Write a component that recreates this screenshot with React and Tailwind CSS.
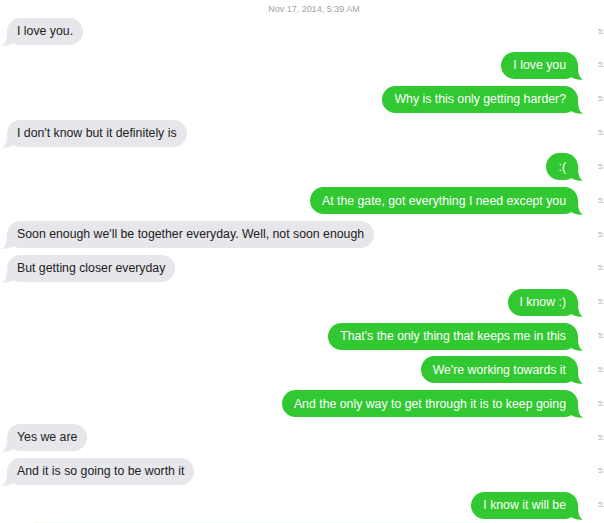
import React from "react";

const messages = [
  { me: false, text: "I love you." },
  { me: true, text: "I love you" },
  { me: true, text: "Why is this only getting harder?" },
  { me: false, text: "I don't know but it definitely is" },
  { me: true, text: ":(" },
  { me: true, text: "At the gate, got everything I need except you" },
  { me: false, text: "Soon enough we'll be together everyday. Well, not soon enough" },
  { me: false, text: "But getting closer everyday" },
  { me: true, text: "I know :)" },
  { me: true, text: "That's the only thing that keeps me in this" },
  { me: true, text: "We're working towards it" },
  { me: true, text: "And the only way to get through it is to keep going" },
  { me: false, text: "Yes we are" },
  { me: false, text: "And it is so going to be worth it" },
  { me: true, text: "I know it will be" },
];

const Tail = ({ me }) => (
  <svg
    width="12"
    height="14"
    viewBox="0 0 12 14"
    className={me ? "absolute -right-[5px] bottom-[-1px]" : "absolute -left-[5px] bottom-[-1px]"}
    style={me ? { transform: "scaleX(-1)" } : undefined}
  >
    <path d="M12 0 L12 11 C9 13 4 14 0 13.5 C3 12 5 9 5 0 Z" fill={me ? "#31c831" : "#e6e6eb"} />
  </svg>
);

const Bubble = ({ me, text }) => (
  <div className="flex items-center h-[27px]">
    <div className={me ? "flex-1 flex justify-end pr-[20px]" : "flex-1 flex justify-start pl-[7px]"}>
      <div
        className={
          me
            ? "relative h-[27px] px-[12px] rounded-[14px] bg-[#31c831] text-white flex items-center"
            : "relative h-[27px] px-[10px] rounded-[14px] bg-[#e6e6eb] text-[#222] flex items-center"
        }
      >
        <Tail me={me} />
        <span className="relative whitespace-nowrap">{text}</span>
      </div>
    </div>
    <div className="w-[6px] overflow-hidden text-[8px] text-[#b0b0b0] whitespace-nowrap">5:39 AM</div>
  </div>
);

export default function App() {
  return (
    <div
      className="w-[604px] h-[523px] overflow-hidden bg-white"
      style={{ fontFamily: '"Liberation Sans", Arial, sans-serif' }}
    >
      <div className="h-[18px] flex items-center justify-center pt-[1px] text-[9px] text-[#a3a3a3] pl-[24px]">
        Nov 17, 2014, 5:39 AM
      </div>
      <div className="flex flex-col gap-[6.85px] text-[12.3px]">
        {messages.map((m, i) => (
          <Bubble key={i} me={m.me} text={m.text} />
        ))}
      </div>
      <div className="mt-[3px] ml-[35px] w-[455px] h-[2px] bg-[#effcef]" />
    </div>
  );
}
